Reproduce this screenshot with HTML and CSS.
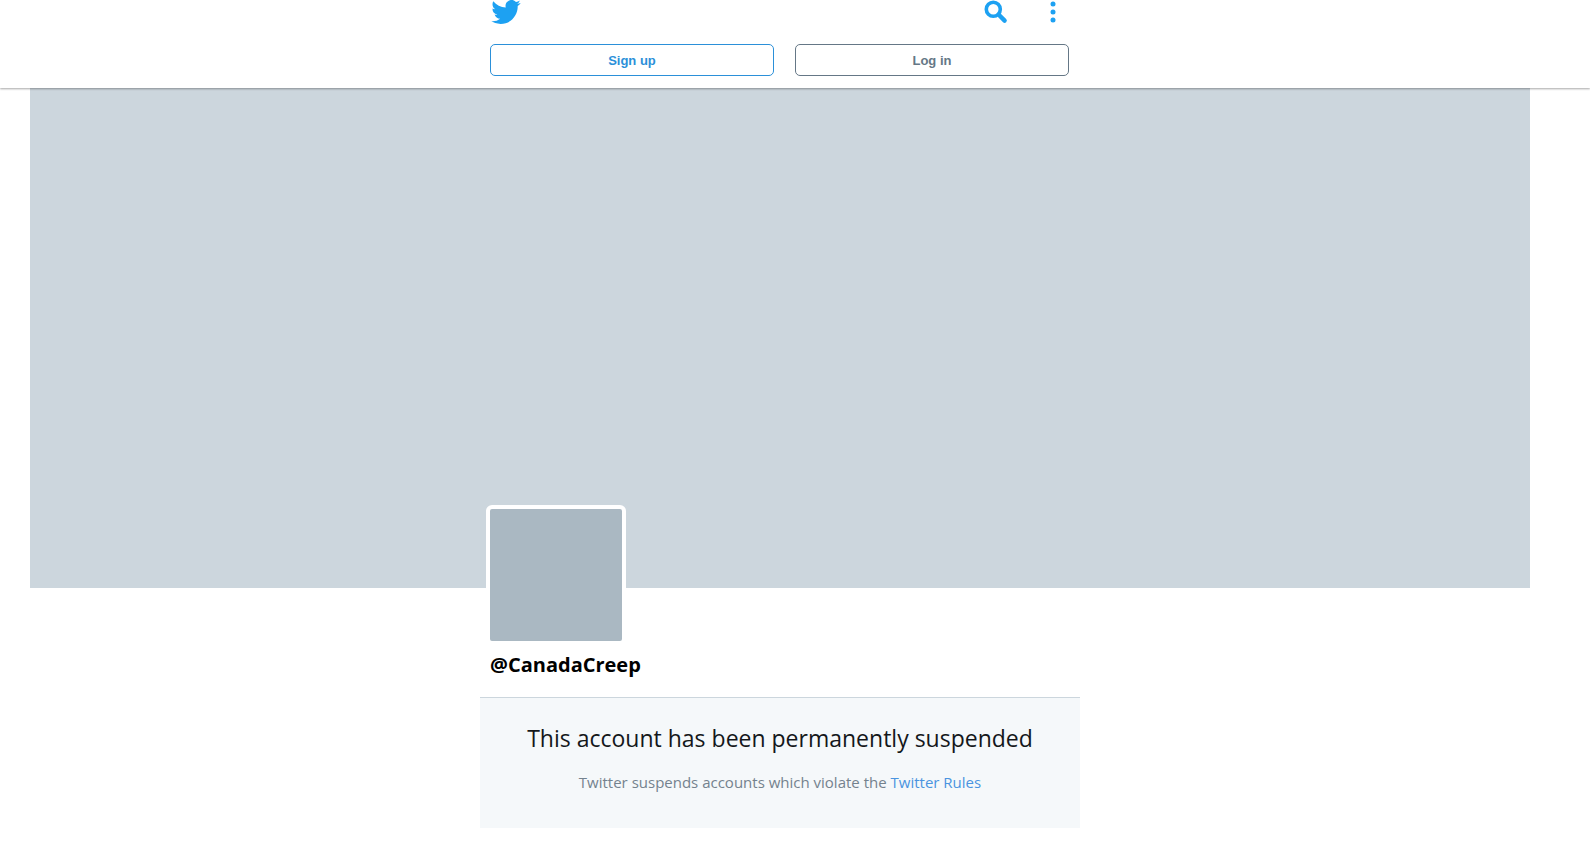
FILE: index.html
```html
<!DOCTYPE html>
<html lang="en">
<head>
    <meta charset="UTF-8">
    <meta name="viewport" content="width=device-width, initial-scale=1">
    <title>Account suspended</title>
    <link rel="stylesheet" href="styles.css">
</head>
<body>
    <header class="header">
        <div class="header-inner">
            <div class="header-top">
                <a class="logo" href="#" aria-label="Twitter">
                    <svg width="30" height="24" viewBox="0 2.2 24 19.6" aria-hidden="true">
                        <path d="M23.953 4.57a10 10 0 01-2.825.775 4.958 4.958 0 002.163-2.723c-.951.555-2.005.959-3.127 1.184a4.92 4.92 0 00-8.384 4.482C7.69 8.095 4.067 6.13 1.64 3.162a4.822 4.822 0 00-.666 2.475c0 1.71.87 3.213 2.188 4.096a4.904 4.904 0 01-2.228-.616v.06a4.923 4.923 0 003.946 4.827 4.996 4.996 0 01-2.212.085 4.936 4.936 0 004.604 3.417 9.867 9.867 0 01-6.102 2.105c-.39 0-.779-.023-1.17-.067a13.995 13.995 0 007.557 2.209c9.053 0 13.998-7.496 13.998-13.985 0-.21 0-.42-.015-.63A9.935 9.935 0 0024 4.59z"/>
                    </svg>
                </a>
                <div class="header-icons">
                    <button class="icon-button" type="button" aria-label="Search">
                        <svg width="24" height="24" viewBox="0 0 24 24" aria-hidden="true">
                            <circle cx="9.3" cy="9.3" r="7" fill="none" stroke="currentColor" stroke-width="3.6"/>
                            <path d="M14.8 14.8l5.8 5.8" stroke="currentColor" stroke-width="4.4" stroke-linecap="round"/>
                        </svg>
                    </button>
                    <button class="icon-button" type="button" aria-label="More">
                        <svg width="6" height="24" viewBox="0 0 6 24" aria-hidden="true">
                            <circle cx="3" cy="4" r="2.5"/>
                            <circle cx="3" cy="12" r="2.5"/>
                            <circle cx="3" cy="20" r="2.5"/>
                        </svg>
                    </button>
                </div>
            </div>
            <div class="header-actions">
                <button class="button button-signup" type="button">Sign up</button>
                <button class="button button-login" type="button">Log in</button>
            </div>
        </div>
    </header>

    <main class="page">
        <div class="banner"></div>
        <div class="profile">
            <div class="avatar"></div>
            <h1 class="username">@CanadaCreep</h1>
        </div>
        <section class="notice">
            <h2 class="notice-title">This account has been permanently suspended</h2>
            <p class="notice-text">Twitter suspends accounts which violate the <a href="#">Twitter Rules</a></p>
        </section>
    </main>
</body>
</html>
```
FILE: styles.css
```css
* {
    box-sizing: border-box;
}

body {
    margin: 0;
    background-color: #fff;
    color: #000;
    font-family: "Open Sans", "Noto Sans", sans-serif;
}

.header {
    position: relative;
    padding: 0 30px 12px 0;
    background-color: #fff;
    box-shadow: 0 1px 2px rgba(0, 0, 0, 0.35);
}

.header-inner {
    max-width: 600px;
    margin: 0 auto;
    padding: 0 11px 0 10px;
}

.header-top {
    display: flex;
    justify-content: space-between;
    height: 44px;
    padding: 0 13px 0 1px;
}

.logo,
.icon-button {
    height: 24px;
    color: #1da1f2;
}

.icon-button {
    padding: 0;
    border: 0;
    background: none;
    cursor: pointer;
}

.header svg {
    display: block;
    fill: currentColor;
}

.header-icons {
    display: flex;
    gap: 42px;
}

.header-actions {
    display: flex;
    gap: 21px;
}

.button {
    height: 32px;
    padding: 0;
    border: 1px solid;
    border-radius: 5px;
    background-color: #fff;
    font-family: "Liberation Sans", Arial, sans-serif;
    font-size: 13px;
    font-weight: bold;
    cursor: pointer;
}

.button-signup {
    flex: 284;
    color: #2b90d9;
}

.button-login {
    flex: 274;
    color: #657786;
}

.page {
    padding-right: 30px;
}

.banner {
    max-width: 1500px;
    height: 500px;
    margin: 0 auto;
    background-color: #ccd6dd;
}

.profile {
    max-width: 600px;
    margin: -83px auto 0;
    padding: 0 6px 16px;
}

/* overlaps the bottom edge of the banner */
.avatar {
    width: 140px;
    height: 140px;
    border: 4px solid #fff;
    border-radius: 6px;
    background-color: #aab8c2;
}

.username {
    margin: 4px 0 0 4px;
    font-size: 20px;
    line-height: 32px;
}

.notice {
    max-width: 600px;
    margin: 0 auto;
    padding: 22px 20px 32px;
    border-top: 1px solid #ccd6dd;
    background-color: #f5f8fa;
    text-align: center;
}

.notice-title {
    margin: 0 0 12px;
    color: #14171a;
    font-size: 23px;
    font-weight: normal;
    line-height: 36px;
}

.notice-text {
    margin: 0;
    color: #74828e;
    font-size: 15px;
    line-height: 28px;
}

.notice-text a {
    color: #4a94e0;
    text-decoration: none;
}
```
